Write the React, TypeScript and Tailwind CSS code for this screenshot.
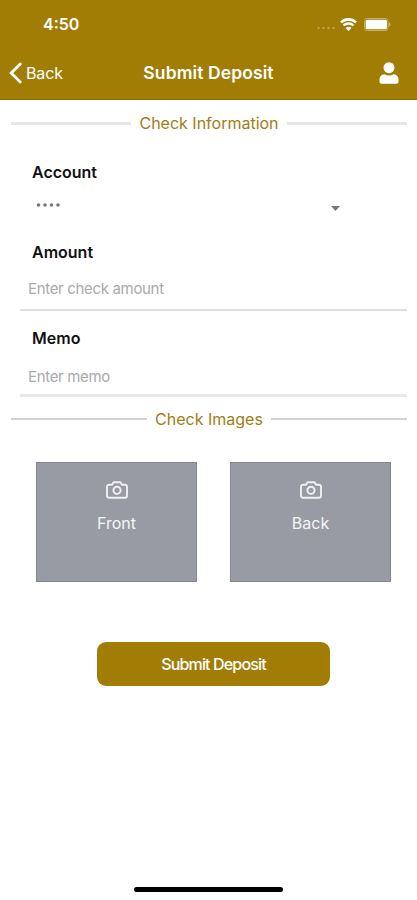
import { ReactNode } from 'react';
import clsx from 'clsx';

interface SectionDividerProps {
  title: string;
  lineClassName: string;
  titleClassName?: string;
}

function SectionDivider({ title, lineClassName, titleClassName }: SectionDividerProps) {
  return (
    <div className="flex h-6 items-center gap-2 pl-[11px] pr-[10px]">
      <div className={clsx('flex-1', lineClassName)} />
      <h2 className={clsx('whitespace-nowrap text-center text-base leading-6 text-[#a07d17]', titleClassName)}>
        {title}
      </h2>
      <div className={clsx('flex-1', lineClassName)} />
    </div>
  );
}

function FieldLabel({ children }: { children: ReactNode }) {
  return <p className="ml-8 h-6 text-base font-semibold leading-6 text-[#111]">{children}</p>;
}

function StatusBar() {
  return (
    <div className="flex h-12 items-center justify-between pl-[43px] pr-[26px]">
      <span className="text-base font-semibold leading-6">4:50</span>
      <div className="flex items-center">
        <svg width="20" height="4" viewBox="0 0 20 4" className="mr-[4px] mt-2" fill="#bda04a">
          <circle cx="2.5" cy="2" r="1.3" />
          <circle cx="7.5" cy="2" r="1.3" />
          <circle cx="12.5" cy="2" r="1.3" />
          <circle cx="17.5" cy="2" r="1.3" />
        </svg>
        <svg width="17" height="13" viewBox="0 0 17 13" className="mr-[7px]" fill="none" stroke="white">
          <path d="M1 4.4C5.2.4 11.8.4 16 4.4" strokeWidth="2.6" />
          <path d="M3.5 7.500c2.800-2.700 7.200-2.700 10 0" strokeWidth="2.300" />
          <path d="M8.5 12.900 5.500 9.900c1.700-1.500 4.300-1.500 6 0z" fill="white" stroke="none" />
        </svg>
        <svg width="27" height="13" viewBox="0 0 27 13">
          <rect x=".5" y=".5" width="23.5" height="12" rx="3" fill="none" stroke="#c9b06a" />
          <rect x="1.7" y="1.7" width="21.2" height="9.6" rx="1.6" fill="white" />
          <path d="M25.2 4.3c1.7.7 1.7 3.7 0 4.4z" fill="#d6c491" />
        </svg>
      </div>
    </div>
  );
}

function CameraIcon() {
  return (
    <svg
      width="22"
      height="18"
      viewBox="0 0 22 18"
      fill="none"
      stroke="#f0f0f2"
      strokeWidth="1.9"
      strokeLinejoin="round"
    >
      <path d="M3 3.7h3L7.5 1.3h7L16 3.7h3a2 2 0 0 1 2 2v9a2 2 0 0 1-2 2H3a2 2 0 0 1-2-2v-9a2 2 0 0 1 2-2z" />
      <circle cx="11" cy="9.3" r="3.6" />
    </svg>
  );
}

function CheckImageButton({ label }: { label: string }) {
  return (
    <button className="flex h-[120px] w-[161px] flex-col items-center border border-[#85878e] bg-[#989ba4] pt-[18px] text-[#f5f5f6]">
      <CameraIcon />
      <span className="mt-3 text-base leading-6">{label}</span>
    </button>
  );
}

export default function App() {
  return (
    <div className="flex h-[900px] w-full flex-col bg-white font-['Inter','Liberation_Sans',sans-serif]">
      <header className="h-[100px] border-b border-[#8f6e00] bg-[#a17d05] text-white">
        <StatusBar />
        <div className="grid h-[50px] grid-cols-[1fr_auto_1fr] items-center pl-[9px] pr-[18px]">
          <button className="flex items-center gap-1">
            <svg
              width="13"
              height="22"
              viewBox="0 0 13 22"
              fill="none"
              stroke="white"
              strokeWidth="2.8"
              strokeLinecap="round"
            >
              <path d="M11.2 2 2.2 11l9 9" />
            </svg>
            <span className="text-base leading-6 tracking-[-0.1px]">Back</span>
          </button>
          <h1 className="ml-[9px] text-[17.5px] font-semibold leading-6 tracking-[0.1px]">Submit Deposit</h1>
          <svg width="20" height="22" viewBox="0 0 20 22" fill="white" className="justify-self-end">
            <circle cx="10" cy="5.7" r="5.5" />
            <path d="M5.3 12.2c3 1.6 6.4 1.6 9.4 0 3 .2 4.8 2.5 4.8 5.400v2.100c0 1.200-.8 2-2 2h-15c-1.200 0-2-.8-2-2v-2.100c0-2.900 1.800-5.200 4.800-5.400z" />
          </svg>
        </div>
      </header>

      <main className="flex flex-1 flex-col">
        <div className="mt-[11px]">
          <SectionDivider title="Check Information" lineClassName="h-[3px] bg-[#e5e8e9]" titleClassName="w-[140px]" />
        </div>

        <div className="mt-[25px]">
          <FieldLabel>Account</FieldLabel>
          <div className="mt-[14px] flex h-[18px] items-center justify-between pl-9 pr-[77px]">
            <svg width="26" height="6" viewBox="0 0 26 6" fill="#777" className="-mt-1">
              <circle cx="2.5" cy="3" r="1.8" />
              <circle cx="9" cy="3" r="1.8" />
              <circle cx="15.5" cy="3" r="1.8" />
              <circle cx="22" cy="3" r="1.8" />
            </svg>
            <svg width="9" height="5" viewBox="0 0 9 5" fill="#777" className="mt-0.5">
              <path d="M0 0h9L4.5 5z" />
            </svg>
          </div>
        </div>

        <div className="mt-6">
          <FieldLabel>Amount</FieldLabel>
          <div className="ml-5 mr-[10px] mt-[13px] border-b-2 border-[#e0e0e0] pb-2 pl-2">
            <p className="text-[15px] leading-6 tracking-[-0.33px] text-[#aaa]">Enter check amount</p>
          </div>
        </div>

        <div className="mt-[15px]">
          <FieldLabel>Memo</FieldLabel>
          <div className="ml-5 mr-[10px] mt-[15px] border-b-[3px] border-[#e9e9e9] pb-[5px] pl-2">
            <p className="text-[15px] leading-6 tracking-[-0.33px] text-[#aaa]">Enter memo</p>
          </div>
        </div>

        <div className="mt-[10px]">
          <SectionDivider title="Check Images" lineClassName="h-[2px] bg-[#d2d2d2]" titleClassName="w-[108px]" />
        </div>

        <div className="mt-[31px] flex gap-[33px] pl-[36px]">
          <CheckImageButton label="Front" />
          <CheckImageButton label="Back" />
        </div>

        <button className="ml-[97px] mt-[60px] h-11 w-[233px] rounded-[9px] bg-[#a17d05] text-base font-medium leading-6 tracking-[-0.85px] text-white">
          Submit Deposit
        </button>

        <div className="mx-auto mb-2 mt-auto h-[5px] w-[149px] rounded-full bg-black" />
      </main>
    </div>
  );
}
